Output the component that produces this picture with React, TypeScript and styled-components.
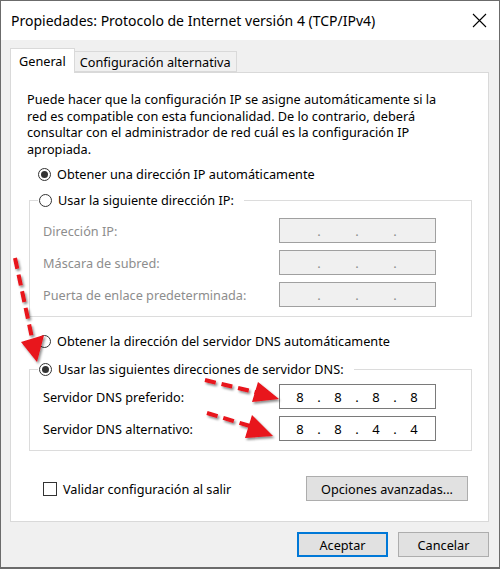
import React from "react";
import styled, { createGlobalStyle } from "styled-components";

const GlobalStyle = createGlobalStyle`
  html, body {
    margin: 0;
    padding: 0;
    background: #ffffff;
  }
  body {
    font-family: "Segoe UI", "Noto Sans", "Liberation Sans", sans-serif;
    font-size: 12.7px;
    color: #000;
  }
`;

const Window = styled.div`
  position: relative;
  width: 500px;
  height: 569px;
  box-sizing: border-box;
  border: 1px solid #6b6b6b;
  border-bottom-width: 2px;
  display: flex;
  flex-direction: column;
  background: #f0f0f0;
`;

const TitleBar = styled.div`
  height: 39px;
  flex-shrink: 0;
  background: #ffffff;
  display: flex;
  align-items: center;
  justify-content: space-between;
  padding: 0 12px 0 10px;
`;

const Title = styled.span`
  font-size: 14px;
  color: #000;
`;

const Body = styled.div`
  flex: 1;
  padding: 8px 10px 0 9px;
  display: flex;
  flex-direction: column;
`;

const TabRow = styled.div`
  display: flex;
  align-items: flex-end;
  position: relative;
  z-index: 1;
  margin-bottom: -1px;
`;

const Tab = styled.div<{ $active?: boolean }>`
  box-sizing: border-box;
  height: ${(p) => (p.$active ? "25px" : "21px")};
  padding: 0 ${(p) => (p.$active ? "8px" : "5px")};
  display: flex;
  align-items: center;
  border: 1px solid #d9d9d9;
  border-bottom: ${(p) => (p.$active ? "none" : "1px solid #d9d9d9")};
  background: ${(p) => (p.$active ? "#ffffff" : "#f0f0f0")};
  margin-left: ${(p) => (p.$active ? "0" : "-1px")};
  margin-bottom: ${(p) => (p.$active ? "0" : "1px")};
`;

const Panel = styled.div`
  box-sizing: border-box;
  height: 450px;
  background: #ffffff;
  border: 1px solid #d9d9d9;
  padding: 18px 16px 0 0;
  display: flex;
  flex-direction: column;
`;

const Description = styled.p`
  margin: 0 0 0 16px;
  line-height: 16.5px;
`;

const Option = styled.label<{ $mt: number }>`
  display: flex;
  align-items: center;
  height: 20px;
  margin: ${(p) => p.$mt}px 0 0 27px;
`;

const RadioMark = styled.span<{ $checked?: boolean }>`
  box-sizing: border-box;
  width: 13px;
  height: 13px;
  border-radius: 50%;
  border: 1px solid #333333;
  background: #ffffff;
  margin-right: 6px;
  display: flex;
  align-items: center;
  justify-content: center;
  &::after {
    content: "";
    width: 7px;
    height: 7px;
    border-radius: 50%;
    background: ${(p) => (p.$checked ? "#333333" : "transparent")};
  }
`;

const CheckMark = styled.span`
  box-sizing: border-box;
  width: 14px;
  height: 14px;
  border: 1px solid #333333;
  background: #ffffff;
  margin-right: 6px;
`;

const Group = styled.fieldset<{ $mt: number; $pt: number; $pb: number }>`
  margin: ${(p) => p.$mt}px 0 0 18px;
  padding: ${(p) => p.$pt}px 35px ${(p) => p.$pb}px 13px;
  border: 1px solid #dcdcdc;
  display: flex;
  flex-direction: column;
  gap: 7px;
  min-width: 0;
`;

const Legend = styled.legend`
  margin-left: -5px;
  padding: 0 10px 0 1px;
  display: flex;
  align-items: center;
  height: 20px;
`;

const FieldRow = styled.div<{ $disabled?: boolean }>`
  display: flex;
  align-items: center;
  justify-content: space-between;
  height: 25px;
  color: ${(p) => (p.$disabled ? "#8d8d8d" : "#000")};
`;

const IpBox = styled.div<{ $disabled?: boolean }>`
  box-sizing: border-box;
  width: 157px;
  height: 25px;
  border: 1px solid ${(p) => (p.$disabled ? "#a0a0a0" : "#7a7a7a")};
  background: ${(p) => (p.$disabled ? "#f0f0f0" : "#ffffff")};
  display: flex;
  align-items: center;
  padding-left: 5px;
  font-size: 13px;
  color: ${(p) => (p.$disabled ? "#8d8d8d" : "#000")};
`;

const Octet = styled.span`
  width: 30px;
  text-align: center;
`;

const Dot = styled.span`
  width: 8px;
  text-align: center;
`;

const BottomRow = styled.div`
  display: flex;
  align-items: center;
  justify-content: space-between;
  margin: 25px 4px 0 32px;
  height: 25px;
`;

const Check = styled.label`
  display: flex;
  align-items: center;
`;

const Button = styled.button<{ $default?: boolean; $w: number }>`
  box-sizing: border-box;
  width: ${(p) => p.$w}px;
  height: 25px;
  font-family: inherit;
  font-size: 12.7px;
  color: #000;
  background: #e1e1e1;
  border: ${(p) => (p.$default ? "2px solid #0078d7" : "1px solid #adadad")};
  padding: 0;
`;

const Footer = styled.div`
  display: flex;
  justify-content: flex-end;
  gap: 10px;
  margin-top: 10px;
`;

const Overlay = styled.svg`
  position: absolute;
  left: -1px;
  top: -1px;
  pointer-events: none;
`;

function IpField({ value, disabled }: { value?: string[]; disabled?: boolean }) {
  const parts = value ?? ["", "", "", ""];
  return (
    <IpBox $disabled={disabled}>
      {parts.map((p, i) => (
        <React.Fragment key={i}>
          <Octet>{p}</Octet>
          {i < 3 && <Dot>.</Dot>}
        </React.Fragment>
      ))}
    </IpBox>
  );
}

function Arrows() {
  const red = "#e8121a";
  return (
    <Overlay width="500" height="569" viewBox="0 0 500 569">
      <defs>
        <filter id="sh" x="-20%" y="-20%" width="140%" height="140%">
          <feDropShadow dx="1.5" dy="2" stdDeviation="1.2" floodColor="#000" floodOpacity="0.45" />
        </filter>
      </defs>
      <g filter="url(#sh)" fill={red} stroke={red}>
        <line x1="15" y1="258" x2="32" y2="338" strokeWidth="4" strokeDasharray="11 6" fill="none" />
        <polygon points="21,342 44,335 37,362" stroke="none" />
        <line x1="205" y1="380" x2="259" y2="393" strokeWidth="4" strokeDasharray="11 6" fill="none" />
        <polygon points="258,382 252,402 279,399" stroke="none" />
        <line x1="207" y1="413" x2="250" y2="426" strokeWidth="4" strokeDasharray="11 6" fill="none" />
        <polygon points="252,415 245,438 273,436" stroke="none" />
      </g>
    </Overlay>
  );
}

export default function App() {
  return (
    <>
      <GlobalStyle />
      <Window>
        <TitleBar>
          <Title>Propiedades: Protocolo de Internet versión 4 (TCP/IPv4)</Title>
          <svg width="15" height="15" viewBox="0 0 15 15">
            <path d="M1 1 L14 14 M14 1 L1 14" stroke="#000" strokeWidth="1.1" />
          </svg>
        </TitleBar>
        <Body>
          <TabRow>
            <Tab $active>General</Tab>
            <Tab>Configuración alternativa</Tab>
          </TabRow>
          <Panel>
            <Description>
              Puede hacer que la configuración IP se asigne automáticamente si la
              <br />
              red es compatible con esta funcionalidad. De lo contrario, deberá
              <br />
              consultar con el administrador de red cuál es la configuración IP
              <br />
              apropiada.
            </Description>
            <Option $mt={7}>
              <RadioMark $checked />
              Obtener una dirección IP automáticamente
            </Option>
            <Group $mt={6} $pt={8} $pb={9}>
              <Legend>
                <RadioMark />
                Usar la siguiente dirección IP:
              </Legend>
              <FieldRow $disabled>
                Dirección IP:
                <IpField disabled />
              </FieldRow>
              <FieldRow $disabled>
                Máscara de subred:
                <IpField disabled />
              </FieldRow>
              <FieldRow $disabled>
                Puerta de enlace predeterminada:
                <IpField disabled />
              </FieldRow>
            </Group>
            <Option $mt={14}>
              <RadioMark />
              Obtener la dirección del servidor DNS automáticamente
            </Option>
            <Group $mt={8} $pt={5} $pb={9}>
              <Legend>
                <RadioMark $checked />
                Usar las siguientes direcciones de servidor DNS:
              </Legend>
              <FieldRow>
                Servidor DNS preferido:
                <IpField value={["8", "8", "8", "8"]} />
              </FieldRow>
              <FieldRow>
                Servidor DNS alternativo:
                <IpField value={["8", "8", "4", "4"]} />
              </FieldRow>
            </Group>
            <BottomRow>
              <Check>
                <CheckMark />
                Validar configuración al salir
              </Check>
              <Button $w={162}>Opciones avanzadas...</Button>
            </BottomRow>
          </Panel>
          <Footer>
            <Button $default $w={91}>Aceptar</Button>
            <Button $w={91}>Cancelar</Button>
          </Footer>
        </Body>
        <Arrows />
      </Window>
    </>
  );
}
